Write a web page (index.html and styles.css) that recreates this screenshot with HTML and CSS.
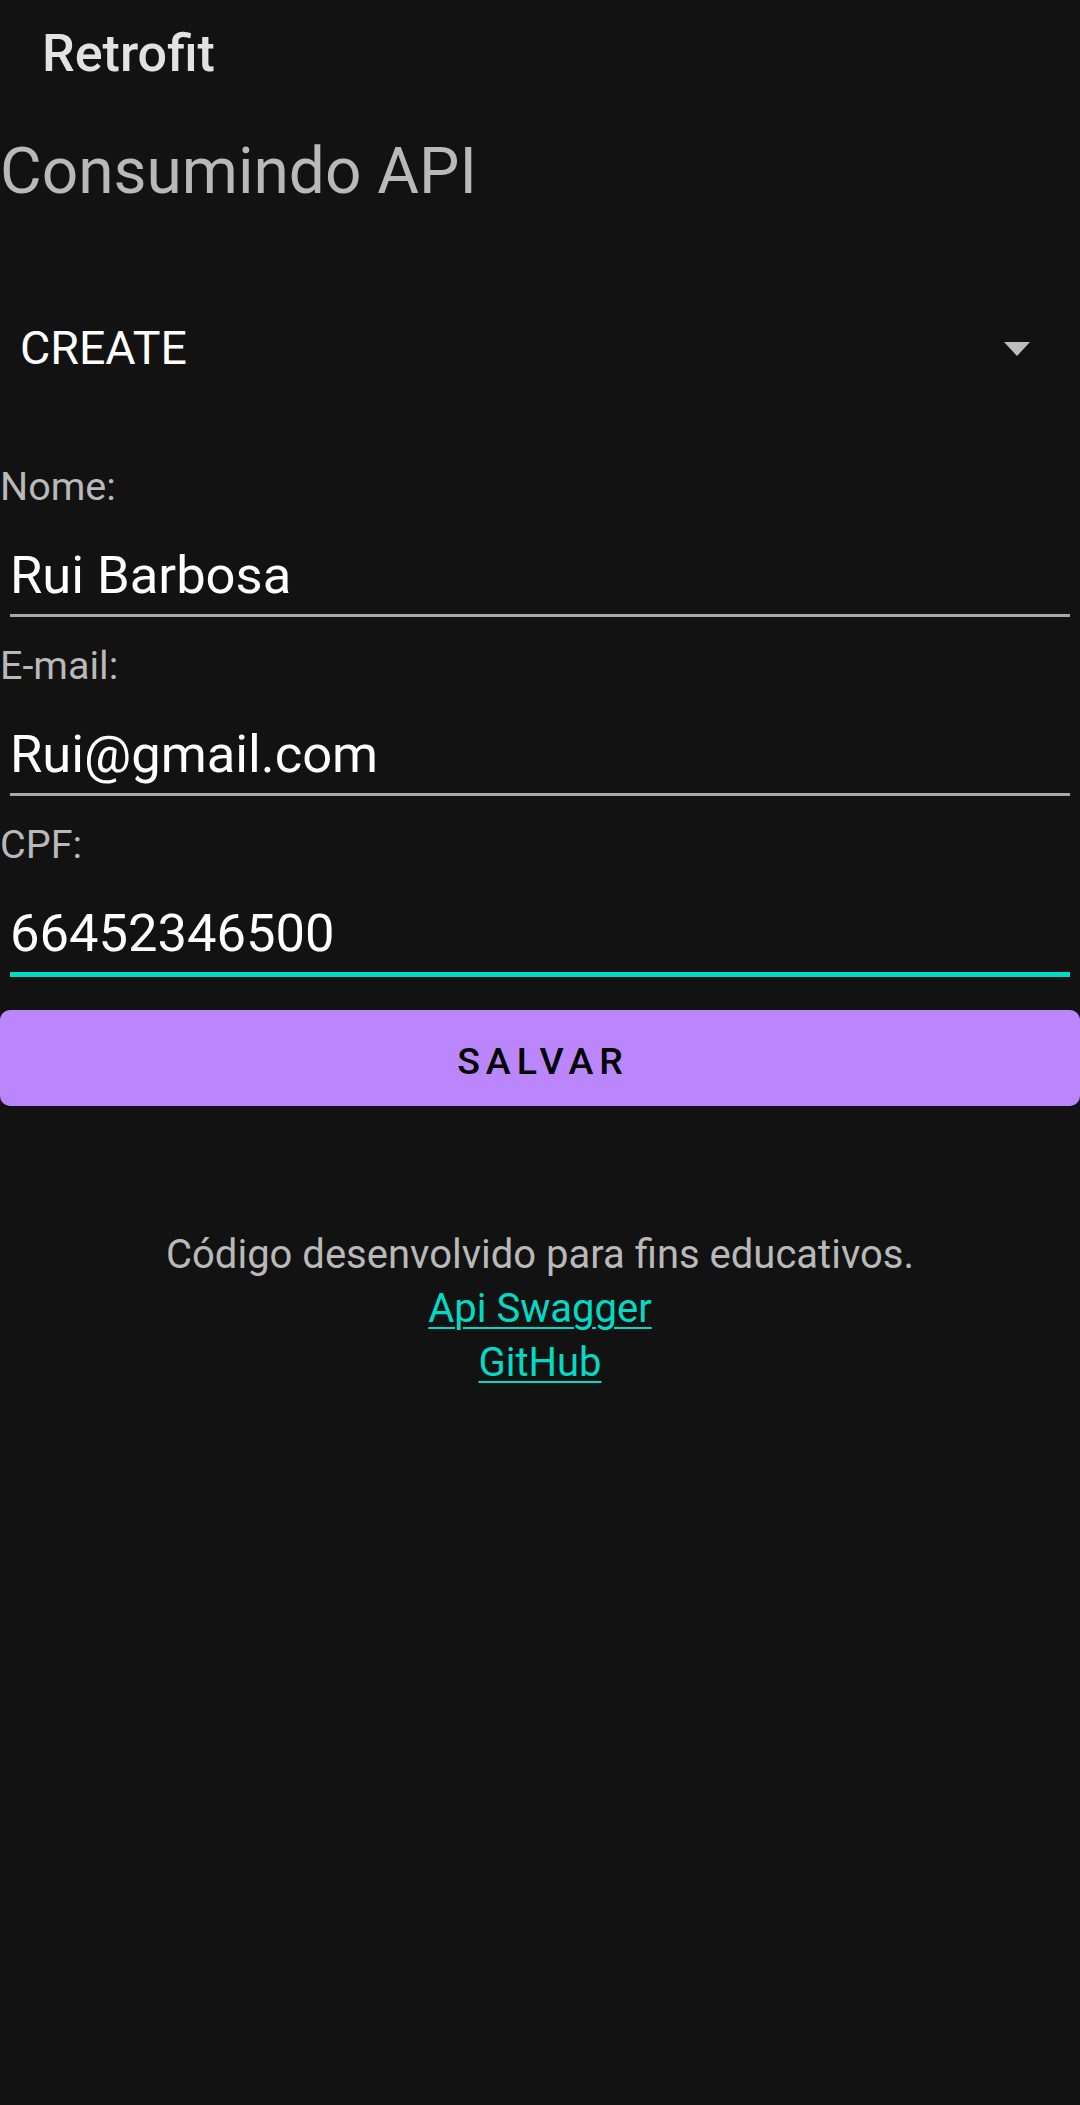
FILE: index.html
```html
<!DOCTYPE html>
<html lang="pt-BR">
<head>
<meta charset="utf-8">
<title>Retrofit</title>
<link rel="stylesheet" href="styles.css">
</head>
<body>
<div class="app">
  <header class="toolbar">
    <h1 class="toolbar-title">Retrofit</h1>
  </header>
  <main class="content">
    <h2 class="heading">Consumindo API</h2>
    <div class="spinner">
      <span class="spinner-text">CREATE</span>
      <svg class="spinner-arrow" width="26" height="14" viewBox="0 0 26 14"><path d="M0 0 H26 L13 14 Z" fill="#bdbdbd"/></svg>
    </div>
    <div class="field">
      <label class="field-label">Nome:</label>
      <div class="field-input">Rui Barbosa</div>
    </div>
    <div class="field">
      <label class="field-label">E-mail:</label>
      <div class="field-input">Rui@gmail.com</div>
    </div>
    <div class="field field-last">
      <label class="field-label">CPF:</label>
      <div class="field-input field-focused">66452346500</div>
    </div>
    <button class="btn">SALVAR</button>
    <footer class="footer">
      <p class="footer-line">Código desenvolvido para fins educativos.</p>
      <p class="footer-line"><a class="link" href="#">Api Swagger</a></p>
      <p class="footer-line"><a class="link" href="#">GitHub</a></p>
    </footer>
  </main>
</div>
</body>
</html>
```
FILE: styles.css
```css
* { box-sizing: border-box; }
html, body {
  margin: 0;
  padding: 0;
  background: #121212;
}
body {
  font-family: Roboto, "Noto Sans", "Liberation Sans", sans-serif;
  width: 1080px;
  min-height: 2105px;
}
.app {
  display: flex;
  flex-direction: column;
}
.toolbar {
  padding: 24px 0 0 42px;
  height: 84px;
}
.toolbar-title {
  margin: 0;
  font-size: 52px;
  line-height: 60px;
  font-weight: 500;
  color: #e2e2e2;
}
.content {
  display: flex;
  flex-direction: column;
}
.heading {
  margin: 50px 0 0 0;
  font-size: 64px;
  line-height: 75px;
  font-weight: 400;
  color: #b9b9b9;
}
.spinner {
  margin-top: 61px;
  height: 157px;
  display: flex;
  align-items: center;
  justify-content: space-between;
  padding: 0 50px 0 20px;
}
.spinner-text {
  font-size: 46.5px;
  line-height: 55px;
  color: #ffffff;
}
.spinner-arrow {
  display: block;
}
.field {
  display: flex;
  flex-direction: column;
  padding-bottom: 26px;
}
.spinner + .field {
  margin-top: 37px;
}
.field-label {
  font-size: 39.5px;
  line-height: 46px;
  color: #b9b9b9;
  margin-bottom: 34px;
}
.field-input {
  margin: 0 10px;
  font-size: 52.5px;
  line-height: 62px;
  padding-bottom: 8px;
  color: #ffffff;
  border-bottom: 3px solid #a9a9a9;
}
.field-focused {
  border-bottom: 5px solid #03dac5;
}
.field-last {
  padding-bottom: 33px;
}
.btn {
  display: block;
  width: 1080px;
  height: 96px;
  margin: 0;
  border: none;
  border-radius: 10px;
  background: #bb86fc;
  color: #000000;
  font-family: Roboto, "Noto Sans", "Liberation Sans", sans-serif;
  font-weight: 500;
  font-size: 37.5px;
  letter-spacing: 6px;
  padding: 5px 0 0 6px;
  text-align: center;
}
.footer {
  margin-top: 122px;
  text-align: center;
}
.footer-line {
  margin: 0;
  font-size: 40px;
  line-height: 54px;
  color: #b9b9b9;
}
.link {
  color: #03dac5;
  text-decoration: underline;
  text-decoration-thickness: 2px;
  text-underline-offset: 5px;
}
```
